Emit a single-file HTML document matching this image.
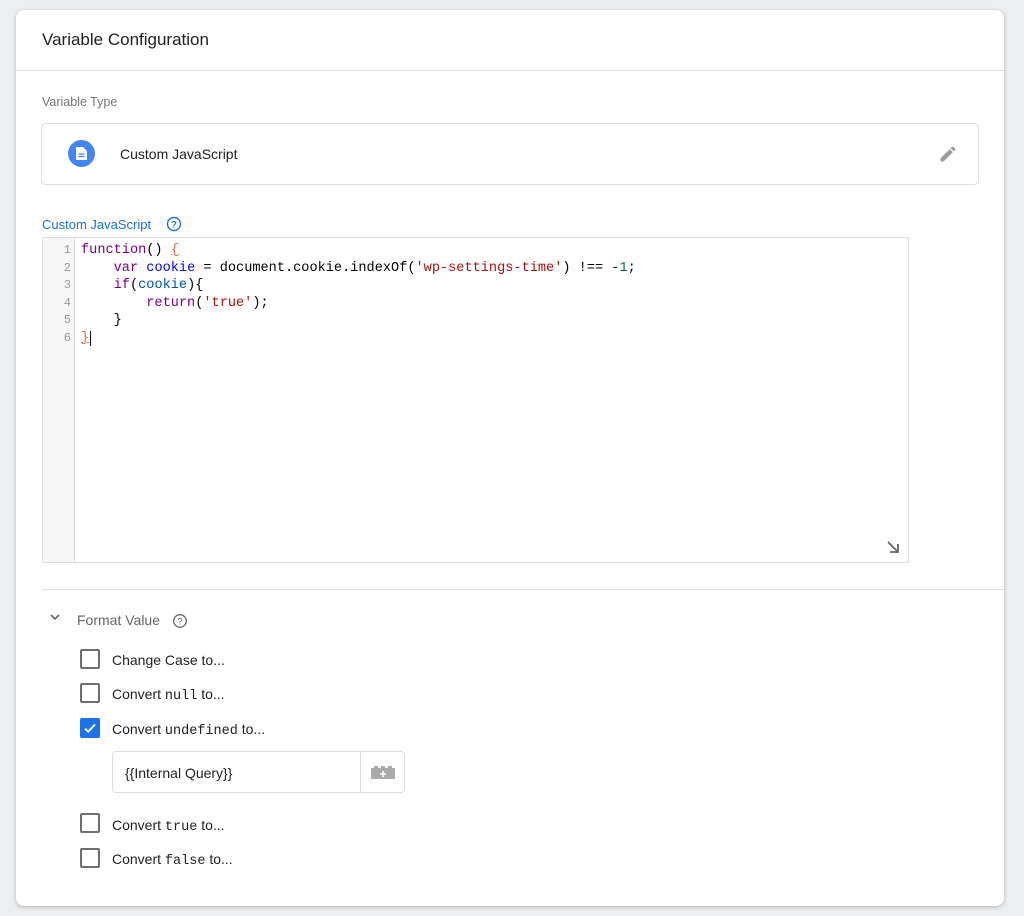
<!DOCTYPE html>
<html><head><meta charset="utf-8"><style>
*{box-sizing:border-box;margin:0;padding:0}
body{width:1024px;height:916px;background:#eceef0;font-family:"Liberation Sans",Arial,sans-serif;position:relative;overflow:hidden}
.card{position:absolute;left:16px;top:10px;width:988px;height:896px;background:#fff;border-radius:8px;box-shadow:0 1px 4px rgba(0,0,0,.25)}
.a{position:absolute}
.mono{font-family:"Liberation Mono",monospace}
.code{font-size:13.6px;line-height:17.5px;white-space:pre;color:#000}
.kw{color:#770088}.vr{color:#0000ff}.vd{color:#0055aa}.st{color:#aa1111}.nm{color:#116644}
.cb{position:absolute;left:80px;width:20px;height:20px;border:2px solid #6f6f6f;border-radius:2px}
.lbl{position:absolute;left:112px;font-size:14px;color:#222}
.lbl span{font-family:"Liberation Mono",monospace;font-size:13.5px}
</style></head><body>
<div class="card"></div>
<div class="a" style="left:42px;top:30px;font-size:17px;color:#202124">Variable Configuration</div>
<div class="a" style="left:16px;top:70px;width:988px;height:1px;background:#e0e0e0"></div>
<div class="a" style="left:42px;top:95px;font-size:12.5px;color:#777">Variable Type</div>
<div class="a" style="left:41px;top:123px;width:938px;height:62px;border:1px solid #ddd;border-radius:5px"></div>
<div class="a" style="left:68px;top:140px;width:27px;height:27px;border-radius:50%;background:#4285f4"></div>
<svg class="a" style="left:75px;top:146px" width="13" height="15" viewBox="0 0 13 15"><path d="M1 1h7l4 4v9H1z" fill="#fff"/><path d="M3.5 8h6M3.5 10.5h6" stroke="#4285f4" stroke-width="1.2"/></svg>
<div class="a" style="left:120px;top:146px;font-size:14px;color:#202124">Custom JavaScript</div>
<svg class="a" style="left:938px;top:144px" width="20" height="20" viewBox="0 0 24 24"><path d="M3 17.25V21h3.75L17.81 9.94l-3.75-3.75L3 17.25zM20.71 7.04a1 1 0 0 0 0-1.410l-2.34-2.34a1 1 0 0 0-1.41 0l-1.83 1.83 3.75 3.75 1.83-1.83z" fill="#9e9e9e"/></svg>
<div class="a" style="left:42px;top:217px;font-size:13px;color:#1a73e8">Custom JavaScript</div>
<svg class="a" style="left:166px;top:216px" width="16" height="16" viewBox="0 0 16 16"><circle cx="8" cy="8" r="6.5" fill="none" stroke="#1a73e8" stroke-width="1.4"/><text x="8" y="11.5" text-anchor="middle" font-size="9.5" font-family="Liberation Sans" font-weight="bold" fill="#1a73e8">?</text></svg>
<div class="a" style="left:42px;top:237px;width:867px;height:326px;border:1px solid #ddd"></div>
<div class="a" style="left:43px;top:238px;width:32px;height:324px;background:#f7f7f7;border-right:1px solid #ddd"></div>
<div class="a mono code" style="left:43px;top:242px;width:28px;text-align:right;color:#999;font-size:12px">1
2
3
4
5
6</div>
<div class="a mono code" style="left:81px;top:242px"><span class="kw">function</span>() <span style="color:#e06c4c;text-decoration:underline">{</span>
    <span class="kw">var</span> <span class="vr">cookie</span> = document.cookie.indexOf(<span class="st">'wp-settings-time'</span>) !== -<span class="nm">1</span>;
    <span class="kw">if</span>(<span class="vd">cookie</span>){
        <span class="kw">return</span>(<span class="st">'true'</span>);
    }
<span style="color:#e06c4c;text-decoration:underline">}</span><span style="border-left:1px solid #000;margin-left:1px"></span></div>
<svg class="a" style="left:886px;top:540px" width="14" height="14" viewBox="0 0 14 14"><path d="M2 2l9 9M4 12h8V4" fill="none" stroke="#666" stroke-width="1.8"/></svg>
<div class="a" style="left:42px;top:589px;width:962px;height:1px;background:#e0e0e0"></div>
<svg class="a" style="left:49px;top:612px" width="12" height="10" viewBox="0 0 12 10"><path d="M2 3l4 4 4-4" fill="none" stroke="#666" stroke-width="1.6"/></svg>
<div class="a" style="left:77px;top:612px;font-size:14px;color:#666">Format Value</div>
<svg class="a" style="left:172px;top:613px" width="16" height="16" viewBox="0 0 16 16"><circle cx="8" cy="8" r="6.3" fill="none" stroke="#666" stroke-width="1.3"/><text x="8" y="11.5" text-anchor="middle" font-size="9.5" font-family="Liberation Sans" fill="#666">?</text></svg>
<div class="cb" style="top:649px"></div><div class="lbl" style="top:652px">Change Case to...</div>
<div class="cb" style="top:683px"></div><div class="lbl" style="top:686px">Convert <span>null</span> to...</div>
<div class="cb" style="top:718px;background:#1a73e8;border-color:#1a73e8"></div>
<svg class="a" style="left:82px;top:720px" width="16" height="16" viewBox="0 0 16 16"><path d="M3 8.5l3.2 3.2L13 4.5" fill="none" stroke="#fff" stroke-width="2"/></svg>
<div class="lbl" style="top:721px">Convert <span>undefined</span> to...</div>
<div class="a" style="left:112px;top:751px;width:293px;height:42px;border:1px solid #ddd;border-radius:4px"></div>
<div class="a" style="left:360px;top:752px;width:1px;height:40px;background:#ddd"></div>
<div class="a" style="left:125px;top:765px;font-size:14px;color:#222">{{Internal Query}}</div>
<svg class="a" style="left:370px;top:764px" width="26" height="16" viewBox="0 0 26 16"><path d="M1 4h3V2h4v2h3V2h4v2h3V2h4v2h3v11H1z" fill="#aaa"/><path d="M13 7v6M10 10h6" stroke="#fff" stroke-width="1.6"/></svg>
<div class="cb" style="top:813px"></div><div class="lbl" style="top:817px">Convert <span>true</span> to...</div>
<div class="cb" style="top:848px"></div><div class="lbl" style="top:851px">Convert <span>false</span> to...</div>
</body></html>
